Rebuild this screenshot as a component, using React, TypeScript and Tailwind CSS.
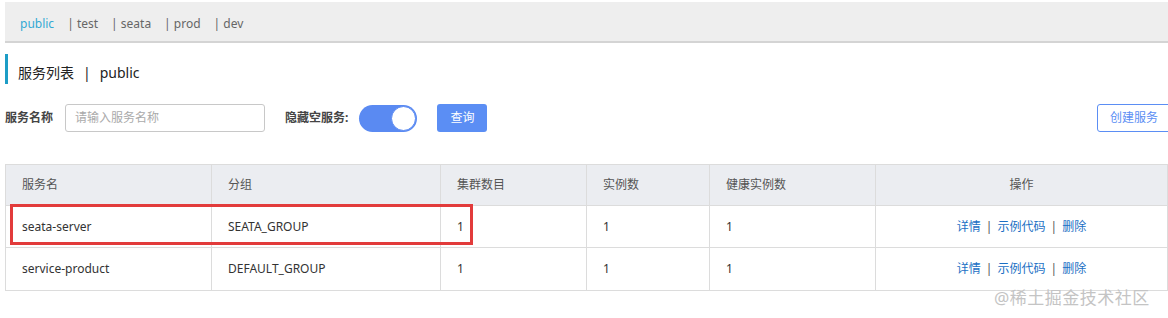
import React from "react";

const tabs = ["public", "test", "seata", "prod", "dev"];

const columns = [
  { title: "服务名", width: "w-[206px]" },
  { title: "分组", width: "w-[229px]" },
  { title: "集群数目", width: "w-[146px]" },
  { title: "实例数", width: "w-[123px]" },
  { title: "健康实例数", width: "w-[166px]" },
  { title: "操作", width: "flex-1" },
];

const services = [
  { name: "seata-server", group: "SEATA_GROUP", clusters: 1, instances: 1, healthy: 1 },
  { name: "service-product", group: "DEFAULT_GROUP", clusters: 1, instances: 1, healthy: 1 },
];

export default function App() {
  return (
    <div
      className="relative w-[1168px] h-[318px] overflow-hidden bg-white text-[12px] text-[#333]"
      style={{ fontFamily: '"Noto Sans", "Noto Sans CJK SC", sans-serif' }}
    >
      {/* Namespace tabs */}
      <div className="ml-[5px] mt-[2px] h-[41px] bg-[#eeeeee] border-b-2 border-[#d4d4d4] flex items-center pl-[15px] pt-[4px] gap-[13px]">
        {tabs.map((tab, i) =>
          i === 0 ? (
            <span key={tab} className="text-[#33a9d4]">
              {tab}
            </span>
          ) : (
            <span key={tab} className="text-[#666]">
              | {tab}
            </span>
          )
        )}
      </div>

      {/* Title */}
      <div className="ml-[5px] mt-[11px] h-[30px] border-l-[3px] border-[#1d9dc6] flex items-center pl-[10px] pt-[6px] text-[14px] text-[#222]">
        服务列表<span className="mx-[9px]">|</span>public
      </div>

      {/* Filter row */}
      <div className="mt-[20px] pl-[5px] h-[28px] flex items-center">
        <span className="font-bold text-[#444]">服务名称</span>
        <div className="ml-[12px] w-[200px] h-[28px] border border-[#c8c8c8] rounded-[3px] flex items-center pl-[9px] text-[#aaa]">
          请输入服务名称
        </div>
        <span className="ml-[20px] font-bold text-[#444]">隐藏空服务:</span>
        <div className="ml-[11px] w-[58px] h-[27px] rounded-full bg-[#5a8af2] flex items-center justify-end pr-[1px]">
          <div className="w-[25px] h-[25px] rounded-full bg-white border border-[#5a8af2]" />
        </div>
        <div className="ml-[20px] w-[50px] h-[28px] rounded-[3px] bg-[#5b8ef4] text-white flex items-center justify-center">
          查询
        </div>
        <div className="ml-auto w-[80px] h-[28px] rounded-[3px] border border-[#5b8ef4] text-[#5b8ef4] flex items-center pl-[12px] shrink-0 mr-[-9px]">
          创建服务
        </div>
      </div>

      {/* Table */}
      <div className="mt-[32px] ml-[5px] w-[1163px] border border-[#dcdcdc]">
        <div className="flex h-[41px] bg-[#ebedf1] border-b border-[#dcdcdc]">
          {columns.map((c, i) => (
            <div
              key={c.title}
              className={`${c.width} flex items-center ${i === columns.length - 1 ? "justify-center" : "pl-[16px] border-r border-[#dcdcdc]"} text-[#555]`}
            >
              {c.title}
            </div>
          ))}
        </div>
        {services.map((s, r) => (
          <div key={s.name} className={`flex h-[42px] ${r === 0 ? "border-b border-[#dcdcdc]" : ""}`}>
            <div className="w-[206px] flex items-center pl-[16px] border-r border-[#dcdcdc]">{s.name}</div>
            <div className="w-[229px] flex items-center pl-[16px] border-r border-[#dcdcdc]">{s.group}</div>
            <div className="w-[146px] flex items-center pl-[16px] border-r border-[#dcdcdc]">{s.clusters}</div>
            <div className="w-[123px] flex items-center pl-[16px] border-r border-[#dcdcdc]">{s.instances}</div>
            <div className="w-[166px] flex items-center pl-[16px] border-r border-[#dcdcdc]">{s.healthy}</div>
            <div className="flex-1 flex items-center justify-center text-[#1a6fc4]">
              <span>详情</span>
              <span className="mx-[5px] text-[#555]">|</span>
              <span>示例代码</span>
              <span className="mx-[5px] text-[#555]">|</span>
              <span>删除</span>
            </div>
          </div>
        ))}
      </div>

      {/* Highlight box over first row */}
      <div className="absolute left-[10px] top-[204px] w-[463px] h-[41px] border-[3px] border-[#e23b3b] pointer-events-none" />

      {/* Watermark */}
      <div className="absolute left-[994px] top-[285px] text-[17px] text-[#c4c4c4] tracking-[0.5px]">
        @稀土掘金技术社区
      </div>
    </div>
  );
}
